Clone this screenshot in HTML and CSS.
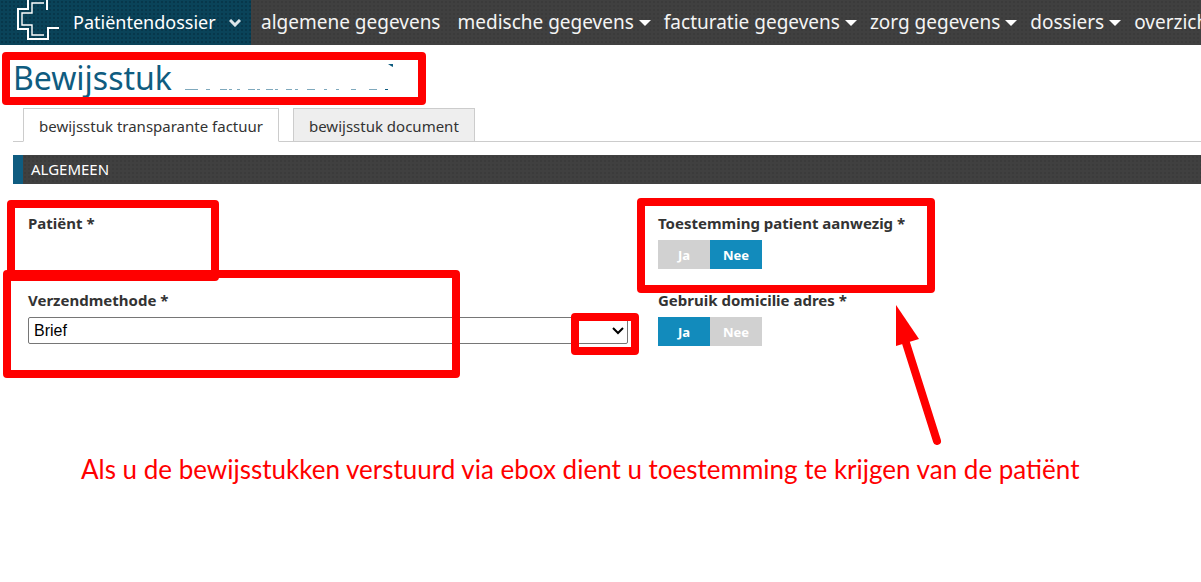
FILE: index.html
```
<!DOCTYPE html>
<html lang="nl">
<head>
    <meta charset="UTF-8">
    <meta name="viewport" content="width=device-width, initial-scale=1.0">
    <title>Bewijsstuk</title>
    <link rel="stylesheet" href="styles.css">
</head>
<body>
    <header class="topbar">
        <button type="button" class="module">
            <svg class="logo" width="44" height="45" viewBox="0 0 44 45" fill="none" stroke="#fff">
                <path stroke-width="2" d="M31 10V0M12 0V9H2V29H12V39H32V28H43"/>
                <path stroke-width="1.4" d="M28 3H16V13H6V25H16V35H28"/>
            </svg>
            <span>Patiëntendossier</span>
            <svg width="12" height="8" viewBox="0 0 12 8" fill="none" stroke="#dce6ea" stroke-width="3">
                <path d="M1 1l5 5 5-5"/>
            </svg>
        </button>
        <nav class="menu">
            <a href="#">algemene gegevens</a>
            <a href="#" class="has-sub">medische gegevens</a>
            <a href="#" class="has-sub">facturatie gegevens</a>
            <a href="#" class="has-sub">zorg gegevens</a>
            <a href="#" class="has-sub">dossiers</a>
            <a href="#" class="has-sub">overzichten</a>
        </nav>
    </header>

    <main>
        <div class="title marked">
            <h1>Bewijsstuk</h1>
            <svg class="remnant" width="210" height="30" viewBox="0 0 210 30" fill="none">
                <path stroke="#7fa9bd" d="M1 27.500h13M22 27.500h4M36 27.500h7M45 27.500h3M53 27.500h3M64 27.500h7M73 27.500h3M82 27.500h7M91 27.500h3M102 27.500h6M111 27.500h3M123 27.500h8M140 27.500h3M152 27.500h3M167 27.500h5M185 27.500h8"/>
                <path stroke="#0f5c80" d="M201 27.500h3"/>
                <path fill="#0f5c80" d="M204 2h5v3l-2-1z"/>
            </svg>
        </div>

        <div class="tabs">
            <button type="button" class="tab active">bewijsstuk transparante factuur</button>
            <button type="button" class="tab">bewijsstuk document</button>
        </div>

        <h2 class="section-title">ALGEMEEN</h2>

        <form class="fields">
            <div class="column">
                <div class="field marked mark-patient">
                    <span class="label">Patiënt *</span>
                </div>
                <div class="field marked mark-method">
                    <label class="label" for="method">Verzendmethode *</label>
                    <div class="select-wrap marked">
                        <select id="method">
                            <option>Brief</option>
                        </select>
                        <svg width="12" height="8" viewBox="0 0 12 8" fill="none" stroke="#000" stroke-width="2">
                            <path d="M1 1l5 5 5-5"/>
                        </svg>
                    </div>
                </div>
            </div>
            <div class="column">
                <div class="field marked mark-consent">
                    <span class="label">Toestemming patient aanwezig *</span>
                    <div class="toggle">
                        <button type="button">Ja</button>
                        <button type="button" class="on">Nee</button>
                    </div>
                </div>
                <div class="field">
                    <span class="label">Gebruik domicilie adres *</span>
                    <div class="toggle">
                        <button type="button" class="on">Ja</button>
                        <button type="button">Nee</button>
                    </div>
                    <svg class="arrow" width="50" height="142" viewBox="0 0 50 142">
                        <path d="M11 38L42 136" fill="none" stroke="#f00" stroke-width="8" stroke-linecap="round"/>
                        <path d="M1 0L24 34L1 41z" fill="#f00"/>
                    </svg>
                </div>
            </div>
        </form>

        <p class="note">Als u de bewijsstukken verstuurd via ebox dient u toestemming te krijgen van de patiënt</p>
    </main>
</body>
</html>
```
FILE: styles.css
```
*,
*::before,
*::after {
    box-sizing: border-box;
}

body {
    margin: 0;
    font-family: "Noto Sans", sans-serif;
    font-size: 15px;
    color: #333;
    background-color: #fff;
    overflow-x: hidden;
}

button {
    border: none;
    font-family: inherit;
    cursor: pointer;
}

/* Top bar */
.topbar {
    display: flex;
    height: 45px;
    overflow: hidden;
    background: #404040 radial-gradient(#3b3b3b 1px, transparent 1px) 0 0 / 4px 4px;
}

.module {
    flex: none;
    display: flex;
    align-items: center;
    gap: 13px;
    width: 251px;
    padding: 0 0 0 16px;
    font-size: 18px;
    color: #fff;
    background: #0a4359 radial-gradient(#07374b 1px, transparent 1px) 0 0 / 4px 4px;
}

.module span {
    padding-bottom: 2px;
}

.menu {
    display: flex;
    align-items: center;
    gap: 17px;
    padding: 0 0 2px 10px;
    font-size: 19px;
    white-space: nowrap;
}

.menu a {
    color: #f4f4f4;
    text-decoration: none;
}

.menu .has-sub {
    margin-right: -4px;
}

.has-sub::after {
    content: "";
    display: inline-block;
    margin-left: 5px;
    border: 6px solid transparent;
    border-top-color: #fff;
    border-bottom: none;
    vertical-align: 3px;
}

/* Title and tabs */
main {
    padding-left: 13px;
}

.title {
    display: flex;
    height: 63px;
    padding-top: 8px;
}

h1 {
    margin: 0;
    font-size: 32px;
    font-weight: 400;
    line-height: 50px;
    color: #0f5c80;
}

.remnant {
    margin: 9px 0 0 12px;
}

.tabs {
    display: flex;
    gap: 14px;
    padding-left: 10px;
    border-bottom: 1px solid #ccc;
}

.tab {
    height: 34px;
    margin-bottom: -1px;
    padding: 2px 15px 0;
    border: 1px solid #ccc;
    font-size: 15px;
    color: #333;
    background-color: #eee;
}

.tab.active {
    border-bottom-color: #fff;
    background-color: #fff;
}

.section-title {
    margin: 13px 0 0;
    padding-left: 8px;
    border-left: 10px solid #0f5c80;
    font-size: 15px;
    font-weight: 400;
    line-height: 29px;
    color: #fff;
    background: #404040 radial-gradient(#3b3b3b 1px, transparent 1px) 0 0 / 4px 4px;
}

/* Form */
.fields {
    display: flex;
    gap: 30px;
    padding: 28px 0 0 15px;
}

.column {
    flex: none;
    width: 600px;
}

.column:last-child {
    flex: 1;
}

.field {
    position: relative;
    height: 77px;
}

.label {
    display: block;
    font-size: 15px;
    font-weight: 700;
    line-height: 22px;
}

.select-wrap {
    margin-top: 6px;
}

.select-wrap svg {
    position: absolute;
    top: 10px;
    right: 4px;
}

select {
    appearance: none;
    display: block;
    width: 100%;
    height: 27px;
    padding: 0 5px;
    border: 1px solid #767676;
    border-radius: 2px;
    font-family: "Liberation Sans", sans-serif;
    font-size: 16px;
    color: #000;
    background-color: #fff;
}

.toggle {
    display: flex;
    margin-top: 6px;
}

.toggle button {
    width: 52px;
    height: 29px;
    padding: 0;
    font-size: 13px;
    font-weight: 700;
    color: #fff;
    background-color: #d1d1d1;
}

.toggle .on {
    background-color: #128bbc;
}

/* Red annotations */
.marked {
    position: relative;
}

.marked::after {
    content: "";
    position: absolute;
    border: 8px solid #f00;
    border-radius: 4px;
    pointer-events: none;
}

.title::after {
    top: 7px;
    left: -11px;
    width: 424px;
    height: 53px;
}

.mark-patient::after {
    top: -12px;
    left: -21px;
    width: 212px;
    height: 81px;
}

.mark-method::after {
    top: -19px;
    left: -25px;
    width: 457px;
    height: 108px;
}

.select-wrap::after {
    top: -4px;
    right: -11px;
    width: 68px;
    height: 42px;
}

.mark-consent::after {
    top: -14px;
    left: -21px;
    width: 298px;
    height: 95px;
}

.arrow {
    position: absolute;
    top: 16px;
    left: 237px;
}

.note {
    margin: 85px 0 0 68px;
    font-family: Lato, sans-serif;
    font-size: 26px;
    line-height: 36px;
    color: #f00;
}
```
